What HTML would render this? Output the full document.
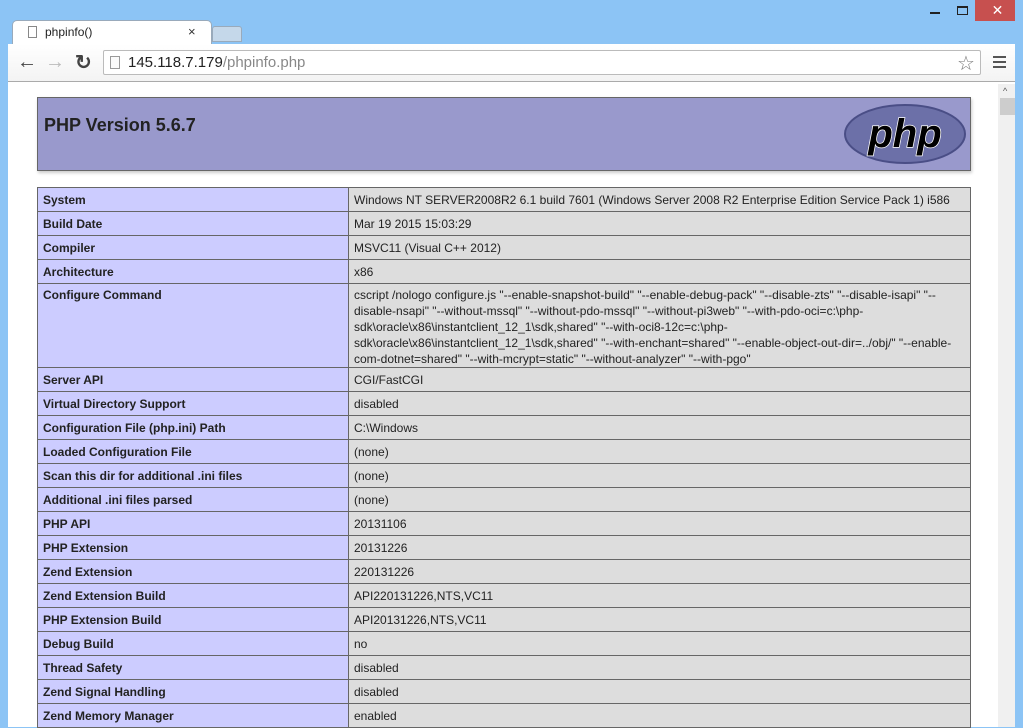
<!DOCTYPE html>
<html><head><style>
*{margin:0;padding:0;box-sizing:border-box}
body{width:1023px;height:727px;overflow:hidden;background:#8cc4f5;font-family:"Liberation Sans",Arial,sans-serif;position:relative}
.tab{position:absolute;left:12px;top:20px;width:200px;height:26px;background:#fff;border:1px solid #9ab;border-bottom:none;border-radius:5px 5px 0 0}
.tab2{position:absolute;left:212px;top:26px;width:30px;height:16px;background:#c5d8ea;border:1px solid #9ab;border-radius:3px 3px 0 0}
.toolbar{position:absolute;left:6px;top:44px;width:1011px;height:40px;background:linear-gradient(#fff,#f2f2f2);border-left:1px solid #9ab;border-right:1px solid #9ab}
.omni{position:absolute;left:103px;top:50px;width:878px;height:25px;background:#fff;border:1px solid #bbb;border-radius:2px}
.content{position:absolute;left:8px;top:81px;width:1008px;height:646px;background:#fff;border-top:1px solid #aaa}
.sb{position:absolute;left:998px;top:84px;width:17px;height:643px;background:#f0f0f0}
.thumb{position:absolute;left:1000px;top:98px;width:15px;height:17px;background:#cdcdcd}
.hdr{position:absolute;left:37px;top:97px;width:934px;height:74px;background:#9999cc;border:1px solid #666;box-shadow:1px 2px 3px #ccc}
.hdr h1{position:absolute;left:6px;top:17px;font-size:18px;color:#222;font-weight:bold}
table{position:absolute;left:37px;top:187px;width:934px;border-collapse:collapse;font-size:12px;color:#222}
td{border:1px solid #666;padding:0 5px;height:24px;vertical-align:middle;line-height:16px}
td.e{background:#ccccff;font-weight:bold;width:311px}
td.v{background:#ddd}
td.m{vertical-align:top;padding-top:3px;padding-bottom:0;height:84px}
</style></head><body>
<div style="position:absolute;left:975px;top:0;width:45px;height:21px;background:#c7504f;color:#fff;text-align:center;font-size:14px;line-height:21px">✕</div>
<div style="position:absolute;left:930px;top:12px;width:10px;height:2px;background:#222"></div>
<div style="position:absolute;left:957px;top:6px;width:11px;height:9px;border:1px solid #222;border-top-width:2px"></div>
<div class="tab"></div><div class="tab2"></div>
<div style="position:absolute;left:28px;top:26px;width:9px;height:12px;border:1px solid #888;background:#fff"></div>
<div style="position:absolute;left:45px;top:25px;font-size:12px;color:#222">phpinfo()</div>
<div style="position:absolute;left:188px;top:24px;font-size:13px;color:#333">×</div>
<div class="toolbar"></div>
<div style="position:absolute;left:17px;top:51px;font-size:20px;color:#444;font-weight:bold">←</div>
<div style="position:absolute;left:45px;top:51px;font-size:20px;color:#bbb;font-weight:bold">→</div>
<div style="position:absolute;left:75px;top:50px;font-size:20px;color:#444;font-weight:bold">↻</div>
<div class="omni"></div>
<div style="position:absolute;left:110px;top:56px;width:10px;height:13px;border:1px solid #999;background:#fafafa"></div>
<div style="position:absolute;left:128px;top:54px;font-size:15px;color:#222">145.118.7.179<span style="color:#888">/phpinfo.php</span></div>
<div style="position:absolute;left:957px;top:51px;font-size:20px;color:#777">☆</div>
<div style="position:absolute;left:993px;top:56px;width:13px;height:2px;background:#555;box-shadow:0 5px 0 #555,0 10px 0 #555"></div>
<div class="content"></div>
<div class="sb"></div><div class="thumb"></div>
<div style="position:absolute;left:1003px;top:86px;font-size:9px;color:#555">^</div>
<div class="hdr"><h1>PHP Version 5.6.7</h1>
<svg style="position:absolute;left:805px;top:5px" width="124" height="62" viewBox="0 0 124 62"><ellipse cx="62" cy="31" rx="60" ry="29" fill="#6c70a8" stroke="#4a4e86" stroke-width="2"/><text x="62" y="44" text-anchor="middle" font-family="Liberation Sans" font-style="italic" font-weight="bold" font-size="40" fill="#000" stroke="#fff" stroke-width="1.5" paint-order="stroke">php</text></svg></div>
<table>
<tr><td class="e">System</td><td class="v">Windows NT SERVER2008R2 6.1 build 7601 (Windows Server 2008 R2 Enterprise Edition Service Pack 1) i586</td></tr>
<tr><td class="e">Build Date</td><td class="v">Mar 19 2015 15:03:29</td></tr>
<tr><td class="e">Compiler</td><td class="v">MSVC11 (Visual C++ 2012)</td></tr>
<tr><td class="e">Architecture</td><td class="v">x86</td></tr>
<tr><td class="e m">Configure Command</td><td class="v m">cscript /nologo configure.js "--enable-snapshot-build" "--enable-debug-pack" "--disable-zts" "--disable-isapi" "--disable-nsapi" "--without-mssql" "--without-pdo-mssql" "--without-pi3web" "--with-pdo-oci=c:\php-sdk\oracle\x86\instantclient_12_1\sdk,shared" "--with-oci8-12c=c:\php-sdk\oracle\x86\instantclient_12_1\sdk,shared" "--with-enchant=shared" "--enable-object-out-dir=../obj/" "--enable-com-dotnet=shared" "--with-mcrypt=static" "--without-analyzer" "--with-pgo"</td></tr>
<tr><td class="e">Server API</td><td class="v">CGI/FastCGI</td></tr>
<tr><td class="e">Virtual Directory Support</td><td class="v">disabled</td></tr>
<tr><td class="e">Configuration File (php.ini) Path</td><td class="v">C:\Windows</td></tr>
<tr><td class="e">Loaded Configuration File</td><td class="v">(none)</td></tr>
<tr><td class="e">Scan this dir for additional .ini files</td><td class="v">(none)</td></tr>
<tr><td class="e">Additional .ini files parsed</td><td class="v">(none)</td></tr>
<tr><td class="e">PHP API</td><td class="v">20131106</td></tr>
<tr><td class="e">PHP Extension</td><td class="v">20131226</td></tr>
<tr><td class="e">Zend Extension</td><td class="v">220131226</td></tr>
<tr><td class="e">Zend Extension Build</td><td class="v">API220131226,NTS,VC11</td></tr>
<tr><td class="e">PHP Extension Build</td><td class="v">API20131226,NTS,VC11</td></tr>
<tr><td class="e">Debug Build</td><td class="v">no</td></tr>
<tr><td class="e">Thread Safety</td><td class="v">disabled</td></tr>
<tr><td class="e">Zend Signal Handling</td><td class="v">disabled</td></tr>
<tr><td class="e">Zend Memory Manager</td><td class="v">enabled</td></tr>
</table>
<div style="position:absolute;left:0;top:0;width:8px;height:727px;background:#8cc4f5"></div>
<div style="position:absolute;left:1015px;top:0;width:8px;height:727px;background:#8cc4f5"></div>
</body></html>
